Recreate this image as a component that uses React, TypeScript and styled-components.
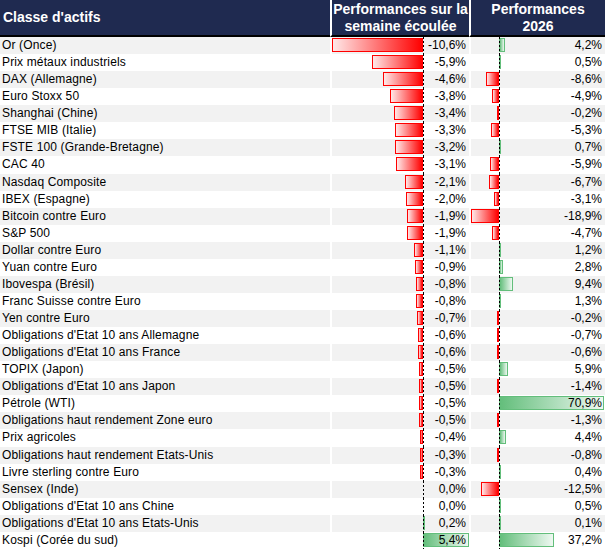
import React from 'react';
import styled, { createGlobalStyle } from 'styled-components';

const GlobalStyle = createGlobalStyle`
  body {
    margin: 0;
    background: #fff;
    font-family: 'Liberation Sans', Arial, sans-serif;
  }
`;

const WEEK_AXIS = 93;
const WEEK_SCALE = 8.6;
const YEAR_AXIS = 30;
const YEAR_SCALE = 1.48;

const Table = styled.div`
  display: grid;
  grid-template-columns: 330px 139px 136px;
  width: 605px;
  color: #000;
`;

const HeaderCell = styled.div<{ $align?: 'left' | 'center' }>`
  background: #1f2a50;
  color: #fff;
  font-weight: bold;
  font-size: 14px;
  line-height: 17px;
  height: 35px;
  border-bottom: 2px solid #000;
  display: flex;
  align-items: center;
  justify-content: ${p => (p.$align === 'center' ? 'center' : 'flex-start')};
  text-align: ${p => p.$align ?? 'left'};
  padding-left: ${p => (p.$align === 'center' ? '0' : '3px')};
  border-left: ${p => (p.$align === 'center' ? '2px solid #fff' : 'none')};
`;

const NameCell = styled.div<{ $shade: boolean }>`
  background: ${p => (p.$shade ? '#f2f2f2' : '#fff')};
  height: 17.07px;
  line-height: 17px;
  font-size: 12px;
  letter-spacing: 0.14px;
  padding-left: 2px;
  white-space: nowrap;
`;

const ValueCell = styled.div<{ $shade: boolean }>`
  position: relative;
  background: ${p => (p.$shade ? '#f2f2f2' : '#fff')};
  border-left: 2px solid #fff;
  height: 17.07px;
  line-height: 17px;
  font-size: 12px;
  text-align: right;
  padding-right: 3px;
`;

const Axis = styled.div<{ $x: number }>`
  position: absolute;
  top: 0;
  bottom: 0;
  left: ${p => p.$x - 2}px;
  width: 1px;
  background: repeating-linear-gradient(to bottom, #000 0 2px, transparent 2px 4px);
`;

const Bar = styled.div<{ $neg: boolean }>`
  position: absolute;
  top: 1px;
  height: 14px;
  box-sizing: border-box;
  border: 1px solid ${p => (p.$neg ? '#ff0000' : '#63be7b')};
  background: ${p =>
    p.$neg
      ? 'linear-gradient(to left, #ff0000, #ffe8e8)'
      : 'linear-gradient(to right, #63be7b, #eef8f1)'};
`;

const Value = styled.span`
  position: relative;
`;

type Row = { name: string; week: number; year: number };

const rows: Row[] = [
  { name: 'Or (Once)', week: -10.6, year: 4.2 },
  { name: 'Prix métaux industriels', week: -5.9, year: 0.5 },
  { name: 'DAX (Allemagne)', week: -4.6, year: -8.6 },
  { name: 'Euro Stoxx 50', week: -3.8, year: -4.9 },
  { name: 'Shanghai (Chine)', week: -3.4, year: -0.2 },
  { name: 'FTSE MIB (Italie)', week: -3.3, year: -5.3 },
  { name: 'FSTE 100 (Grande-Bretagne)', week: -3.2, year: 0.7 },
  { name: 'CAC 40', week: -3.1, year: -5.9 },
  { name: 'Nasdaq Composite', week: -2.1, year: -6.7 },
  { name: 'IBEX (Espagne)', week: -2.0, year: -3.1 },
  { name: 'Bitcoin contre Euro', week: -1.9, year: -18.9 },
  { name: 'S&P 500', week: -1.9, year: -4.7 },
  { name: 'Dollar contre Euro', week: -1.1, year: 1.2 },
  { name: 'Yuan contre Euro', week: -0.9, year: 2.8 },
  { name: 'Ibovespa (Brésil)', week: -0.8, year: 9.4 },
  { name: 'Franc Suisse contre Euro', week: -0.8, year: 1.3 },
  { name: 'Yen contre Euro', week: -0.7, year: -0.2 },
  { name: "Obligations d'Etat 10 ans Allemagne", week: -0.6, year: -0.7 },
  { name: "Obligations d'Etat 10 ans France", week: -0.6, year: -0.6 },
  { name: 'TOPIX (Japon)', week: -0.5, year: 5.9 },
  { name: "Obligations d'Etat 10 ans Japon", week: -0.5, year: -1.4 },
  { name: 'Pétrole (WTI)', week: -0.5, year: 70.9 },
  { name: 'Obligations haut rendement Zone euro', week: -0.5, year: -1.3 },
  { name: 'Prix agricoles', week: -0.4, year: 4.4 },
  { name: 'Obligations haut rendement Etats-Unis', week: -0.3, year: -0.8 },
  { name: 'Livre sterling contre Euro', week: -0.3, year: 0.4 },
  { name: 'Sensex (Inde)', week: 0.0, year: -12.5 },
  { name: "Obligations d'Etat 10 ans Chine", week: 0.0, year: 0.5 },
  { name: "Obligations d'Etat 10 ans Etats-Unis", week: 0.2, year: 0.1 },
  { name: 'Kospi (Corée du sud)', week: 5.4, year: 37.2 },
];

const fmt = (v: number) => v.toFixed(1).replace('.', ',') + '%';

const DataBar: React.FC<{ value: number; axis: number; scale: number }> = ({
  value,
  axis,
  scale,
}) => {
  if (value === 0) return null;
  const w = Math.max(2, Math.abs(value) * scale);
  const neg = value < 0;
  const left = neg ? axis - w : axis;
  return <Bar $neg={neg} style={{ left: left - 2, width: w }} />;
};

const PerfCell: React.FC<{
  value: number;
  axis: number;
  scale: number;
  shade: boolean;
}> = ({ value, axis, scale, shade }) => (
  <ValueCell $shade={shade}>
    <DataBar value={value} axis={axis} scale={scale} />
    <Axis $x={axis} />
    <Value>{fmt(value)}</Value>
  </ValueCell>
);

const App: React.FC = () => (
  <>
    <GlobalStyle />
    <Table>
      <HeaderCell>Classe d'actifs</HeaderCell>
      <HeaderCell $align="center">
        Performances sur la
        <br />
        semaine écoulée
      </HeaderCell>
      <HeaderCell $align="center">
        Performances
        <br />
        2026
      </HeaderCell>
      {rows.map((r, i) => {
        const shade = i % 2 === 0;
        return (
          <React.Fragment key={r.name}>
            <NameCell $shade={shade}>{r.name}</NameCell>
            <PerfCell value={r.week} axis={WEEK_AXIS} scale={WEEK_SCALE} shade={shade} />
            <PerfCell value={r.year} axis={YEAR_AXIS} scale={YEAR_SCALE} shade={shade} />
          </React.Fragment>
        );
      })}
    </Table>
  </>
);

export default App;
